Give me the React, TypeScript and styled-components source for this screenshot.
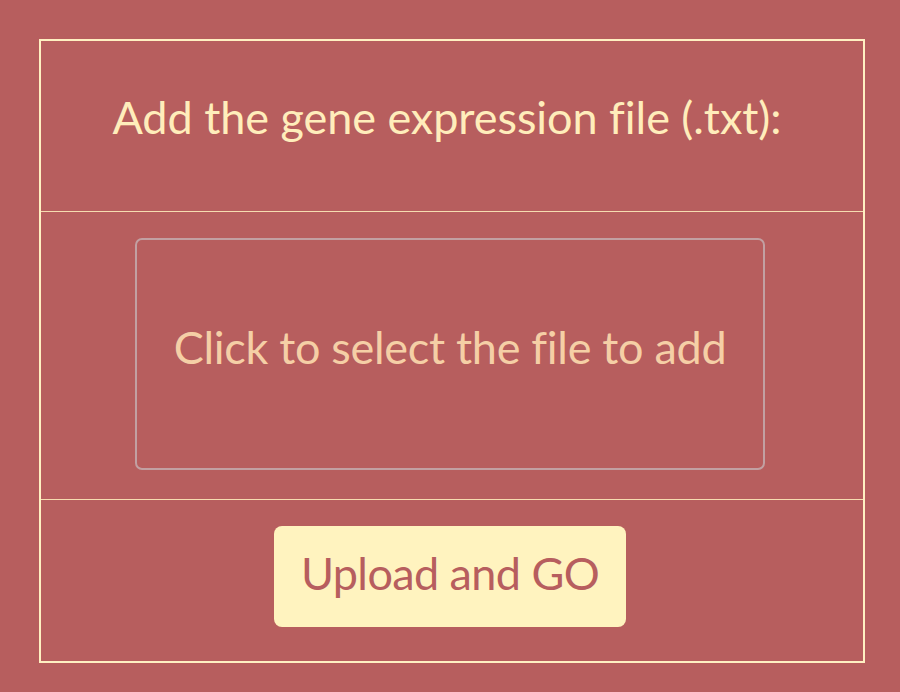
import React from "react";
import styled, { createGlobalStyle } from "styled-components";

const Global = createGlobalStyle`
  html, body { margin: 0; padding: 0; background: #b75e5e; }
  body { font-family: Lato, "Open Sans", sans-serif; }
`;

const Page = styled.div`
  padding: 39px 35px 30px 39px;
`;

const Frame = styled.div`
  width: 822px;
  border: 2px solid #fff0c2;
  display: flex;
  flex-direction: column;
`;

const Section = styled.div<{ $h: number; $top?: number; $right?: number; $divider?: boolean }>`
  height: ${(p) => p.$h}px;
  box-sizing: border-box;
  display: flex;
  justify-content: center;
  align-items: flex-start;
  padding-top: ${(p) => p.$top ?? 0}px;
  padding-right: ${(p) => p.$right ?? 4}px;
  border-top: ${(p) => (p.$divider ? "1px solid #f6dcb0" : "none")};
`;

const Title = styled.h1`
  margin: 0;
  font-weight: 400;
  font-size: 45px;
  line-height: 56px;
  color: #ffedbb;
  letter-spacing: -0.05px;
  white-space: nowrap;
`;

const DropZone = styled.div`
  width: 630px;
  height: 232px;
  box-sizing: border-box;
  border: 2px solid #c2a0a2;
  border-radius: 7px;
  display: flex;
  align-items: center;
  justify-content: center;
  padding-bottom: 15px;
  color: #f5cfa6;
  font-size: 45px;
  letter-spacing: -0.3px;
  cursor: pointer;
`;

const Button = styled.button`
  width: 352px;
  height: 101px;
  border: none;
  border-radius: 8px;
  background: #fff3bf;
  color: #b75e5e;
  font-family: inherit;
  font-size: 45px;
  letter-spacing: -0.6px;
  cursor: pointer;
  padding: 0 0 8px;
`;

export default function App() {
  return (
    <>
      <Global />
      <Page>
        <Frame>
          <Section $h={170} $top={48} $right={10}>
            <Title>Add the gene expression file (.txt):</Title>
          </Section>
          <Section $h={288} $top={26} $divider>
            <DropZone>Click to select the file to add</DropZone>
          </Section>
          <Section $h={162} $top={26} $divider>
            <Button>Upload and GO</Button>
          </Section>
        </Frame>
      </Page>
    </>
  );
}
